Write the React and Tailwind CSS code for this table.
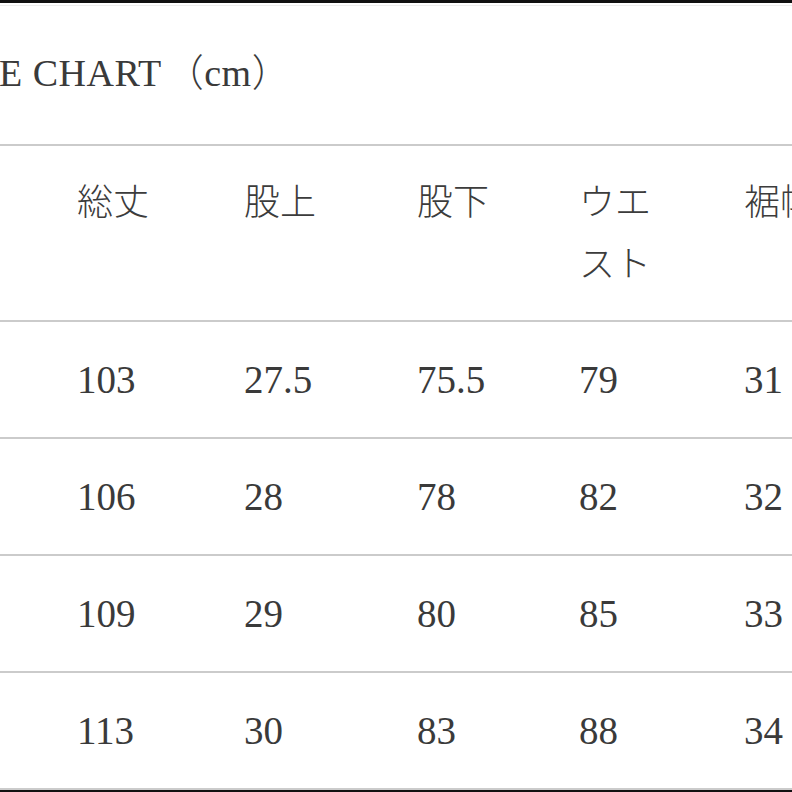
export default function App() {
  const font = { fontFamily: '"Liberation Serif", "Noto Sans CJK JP", serif' };
  const cols = "grid grid-cols-[167px_173px_162px_165px_1fr] pl-[77px]";
  const rows = [
    ["103", "27.5", "75.5", "79", "31"],
    ["106", "28", "78", "82", "32"],
    ["109", "29", "80", "85", "33"],
    ["113", "30", "83", "88", "34"],
  ];
  return (
    <div className="w-[792px] h-[792px] bg-white overflow-hidden text-[#3a3a3a] flex flex-col font-['Liberation_Serif','Noto_Sans_CJK_JP',serif]">
      <div className="h-[3px] bg-[#111] shrink-0" />
      <div className="h-[2px] bg-white shrink-0" />
      <div className="h-[1px] bg-[#ededed] shrink-0" />
      <div className="h-[138px] shrink-0 flex items-start pt-[39px]">
        <div className="text-[38px] leading-[50px] whitespace-nowrap -ml-[1px] tracking-[0.5px]">
          E CHART<span className="font-['Noto_Sans_CJK_JP',serif] font-light ml-[4px]">（</span>cm<span className="font-['Noto_Sans_CJK_JP',serif] font-light">）</span>
        </div>
      </div>
      <div className="border-t-2 border-b-2 border-[#cbcbcb] h-[178px] shrink-0">
        <div className={cols + " pt-[22px] text-[36px] leading-[62px] font-['Noto_Sans_CJK_JP',serif] font-light text-[#3c3c3c] whitespace-nowrap"}>
          <div>総丈</div>
          <div>股上</div>
          <div>股下</div>
          <div className="w-[90px] whitespace-normal">ウエスト</div>
          <div>裾幅</div>
        </div>
      </div>
      {rows.map((r, i) => (
        <div key={i} className="border-b-2 border-[#cbcbcb] h-[117px] shrink-0 flex items-center">
          <div className={cols + " w-full text-[39px] leading-none whitespace-nowrap"} style={font}>
            {r.map((v, j) => (
              <div key={j}>{v}</div>
            ))}
          </div>
        </div>
      ))}
      <div className="flex-1 bg-[#111]" />
    </div>
  );
}
